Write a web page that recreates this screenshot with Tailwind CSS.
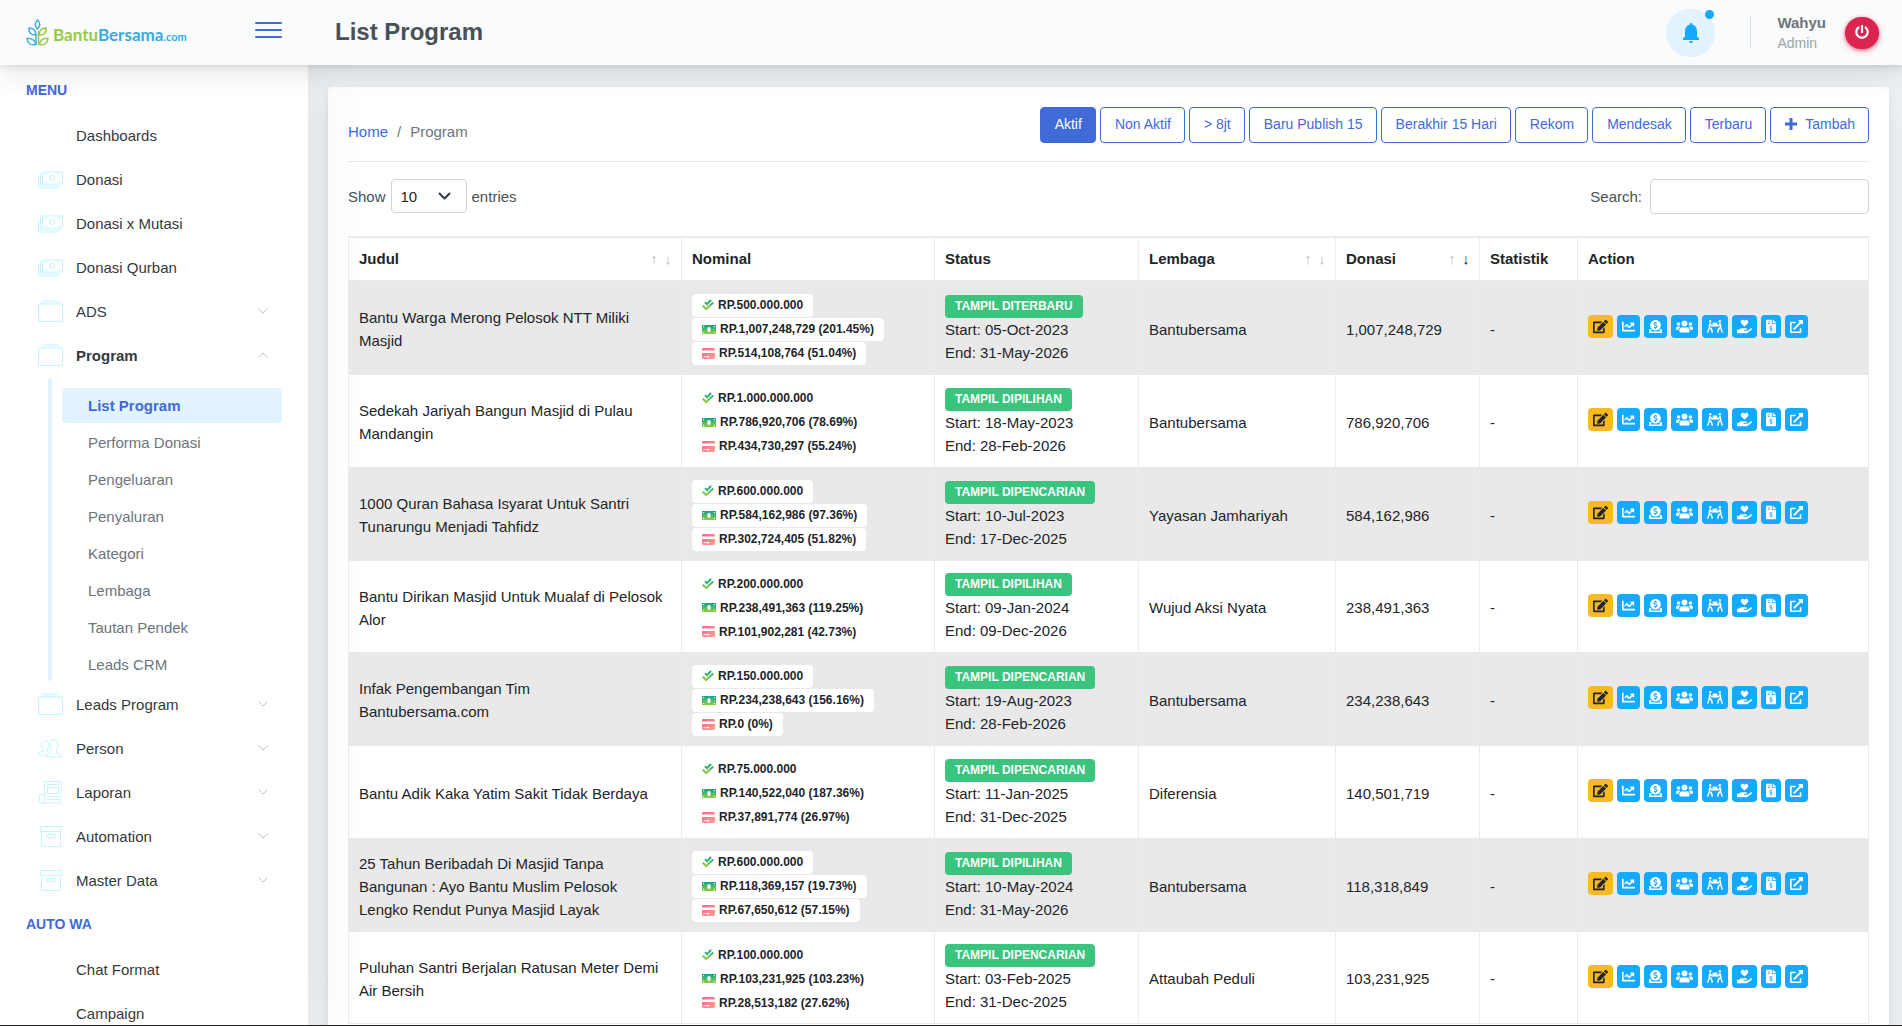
<!DOCTYPE html>
<html lang="id">
<head>
    <meta charset="UTF-8">
    <meta name="viewport" content="width=device-width, initial-scale=1.0">
    <title>List Program</title>
    <script src="https://cdn.jsdelivr.net/npm/@tailwindcss/browser@4"></script>
</head>
<body class="h-screen overflow-hidden flex flex-col bg-[#edf1f4] border-b border-[#222222] font-['Liberation_Sans',Arial,sans-serif] text-[15px] leading-[23px] text-[#495057]">

    <!-- Icon sprite -->
    <svg class="absolute w-0 h-0" aria-hidden="true">
        <defs>
            <linearGradient id="green" x1="0" y1="0" x2="0" y2="1">
                <stop offset="0" stop-color="#0ba58f"/>
                <stop offset="1" stop-color="#8fcf3c"/>
            </linearGradient>
            <linearGradient id="pink" x1="0" y1="0" x2="1" y2="1">
                <stop offset="0" stop-color="#ff5f8f"/>
                <stop offset="1" stop-color="#ffa08a"/>
            </linearGradient>
        </defs>
        <symbol id="cash" viewBox="0 0 25 18">
            <g fill="none" stroke="currentColor">
                <path d="M4.500 1.500h20v12h-20z"/>
                <path d="M2.500 2.500v13h20.500M.5 4.500v13h20.500" />
                <circle cx="14.500" cy="7.500" r="2.500"/>
                <path d="M6.500 3.500h3M19.500 3.500h3M6.500 11.500h2M20.500 11.500h2"/>
            </g>
        </symbol>
        <symbol id="albums" viewBox="0 0 25 22">
            <g fill="none" stroke="currentColor">
                <path d="M.5 3.500h24v17.500h-24z"/>
                <path d="M4 .5h17"/>
                <path d="M2 2.500h21" opacity=".5"/>
            </g>
        </symbol>
        <symbol id="persons" viewBox="0 0 25 20">
            <g fill="none" stroke="currentColor">
                <path d="M8.500 18.500v-1.500c0-1 1-1.500 5-3v-2c-1.500-1.500-1.500-4-1.500-6 0-3 1.500-5 4-5s4 2 4 5c0 2 0 4.500-1.500 6v2c4 1.500 5 2 5 3v1.500z"/>
                <path d="M8 16.500H1v-1.500c0-1 1-1.500 4-2.500v-2c-1-1-1.500-2.500-1.500-4 0-2.500 1.500-4 3.500-4s3.500 1 3.500 3c0 2 0 4-1.500 5v2l2 1"/>
            </g>
        </symbol>
        <symbol id="news" viewBox="0 0 25 23">
            <g fill="none" stroke="currentColor">
                <path d="M6.500 22v-21.500h16.500v21.500h-19.500c-1.500 0-2-.5-2-2v-6.500h5"/>
                <path d="M9 3.500h12M9.500 6.500h11v6h-11zM9 15.500h12M9 18.500h12"/>
            </g>
        </symbol>
        <symbol id="box" viewBox="0 0 25 21">
            <g fill="none" stroke="currentColor">
                <path d="M2.500 .5h21v5h-21zM3.500 5.500v15h19v-15"/>
                <rect x="8.500" y="8.500" width="9" height="3" rx="1.500"/>
            </g>
        </symbol>
        <symbol id="edit" viewBox="0 0 576 512"><path fill="currentColor" d="M402.600 83.200l90.200 90.200c3.800 3.800 3.800 10 0 13.800L274.400 405.600l-92.800 10.300c-12.400 1.400-22.900-9.100-21.500-21.500l10.300-92.800L388.800 83.200c3.800-3.800 10-3.800 13.800 0zm162-22.900l-48.800-48.800c-15.200-15.200-39.900-15.200-55.200 0l-35.400 35.400c-3.800 3.800-3.800 10 0 13.800l90.200 90.200c3.800 3.800 10 3.800 13.800 0l35.400-35.400c15.200-15.300 15.200-40 0-55.200zM384 346.200V448H64V128h229.800c3.200 0 6.200-1.300 8.500-3.500l40-40c7.600-7.600 2.200-20.500-8.500-20.500H48C21.500 64 0 85.500 0 112v352c0 26.500 21.500 48 48 48h352c26.500 0 48-21.500 48-48V306.200c0-10.700-12.900-16-20.500-8.500l-40 40c-2.200 2.300-3.500 5.300-3.500 8.500z"/></symbol>
        <symbol id="chart" viewBox="0 0 512 512"><path fill="currentColor" d="M496 384H64V80c0-8.840-7.160-16-16-16H16C7.160 64 0 71.160 0 80v336c0 17.670 14.330 32 32 32h464c8.840 0 16-7.160 16-16v-32c0-8.840-7.160-16-16-16zM464 96H345.940c-21.380 0-32.090 25.850-16.970 40.970l32.400 32.400L288 242.750l-73.370-73.370c-12.500-12.500-32.760-12.500-45.250 0l-68.690 68.690c-6.250 6.250-6.250 16.380 0 22.630l22.620 22.620c6.250 6.250 16.380 6.250 22.630 0L192 237.250l73.370 73.370c12.500 12.500 32.760 12.500 45.250 0l96-96 32.400 32.400c15.120 15.120 40.970 4.410 40.970-16.970V112c.01-8.840-7.150-16-15.990-16z"/></symbol>
        <symbol id="donate" viewBox="0 0 512 512"><path fill="currentColor" d="M256 416c114.900 0 208-93.100 208-208S370.900 0 256 0 48 93.100 48 208s93.100 208 208 208zM233.800 97.400V80.600c0-9.200 7.400-16.600 16.600-16.600h11.100c9.200 0 16.600 7.400 16.600 16.600v17c15.500.8 30.500 6.100 43 15.400 5.600 4.100 6.200 12.300 1.200 17.100L306 145.600c-3.800 3.700-9.500 3.800-14 1-5.400-3.400-11.400-5.100-17.800-5.100h-38.900c-9 0-16.300 8.200-16.300 18.300 0 8.200 5 15.500 12.100 17.600l62.300 18.700c25.700 7.700 43.700 32.400 43.700 60.100 0 34-26.400 61.500-59.100 62.400v16.800c0 9.200-7.400 16.600-16.600 16.600h-11.100c-9.200 0-16.600-7.400-16.600-16.600v-17c-15.500-.8-30.500-6.100-43-15.400-5.600-4.100-6.200-12.300-1.200-17.100l16.300-15.500c3.800-3.700 9.500-3.800 14-1 5.400 3.400 11.400 5.100 17.800 5.100h38.900c9 0 16.300-8.200 16.300-18.300 0-8.200-5-15.500-12.100-17.600l-62.300-18.700c-25.700-7.700-43.700-32.400-43.700-60.100.1-34 26.400-61.500 59.100-62.400zM480 352h-32.500c-19.600 26-44.600 47.700-73 64h63.800c5.300 0 9.600 3.600 9.600 8v16c0 4.400-4.300 8-9.600 8H73.600c-5.300 0-9.600-3.600-9.600-8v-16c0-4.400 4.300-8 9.600-8h63.800c-28.400-16.300-53.300-38-73-64H32c-17.700 0-32 14.300-32 32v96c0 17.700 14.300 32 32 32h448c17.700 0 32-14.300 32-32v-96c0-17.700-14.300-32-32-32z"/></symbol>
        <symbol id="users" viewBox="0 0 640 512"><path fill="currentColor" d="M96 224c35.300 0 64-28.700 64-64s-28.700-64-64-64-64 28.700-64 64 28.700 64 64 64zm448 0c35.300 0 64-28.700 64-64s-28.700-64-64-64-64 28.700-64 64 28.700 64 64 64zm32 32h-64c-17.600 0-33.500 7.100-45.100 18.600 40.300 22.100 68.900 62 75.100 109.400h66c17.700 0 32-14.300 32-32v-32c0-35.300-28.700-64-64-64zm-256 0c61.900 0 112-50.100 112-112S381.900 32 320 32 208 82.100 208 144s50.100 112 112 112zm76.800 32h-8.300c-20.800 10-43.900 16-68.500 16s-47.600-6-68.500-16h-8.300C179.600 288 128 339.600 128 403.200V432c0 26.500 21.500 48 48 48h288c26.500 0 48-21.500 48-48v-28.800c0-63.600-51.600-115.200-115.200-115.200zm-223.700-13.400C161.500 263.100 145.600 256 128 256H64c-35.300 0-64 28.700-64 64v32c0 17.700 14.300 32 32 32h65.900c6.300-47.400 34.900-87.300 75.200-109.400z"/></symbol>
        <symbol id="carry" viewBox="0 0 640 512">
            <g fill="currentColor">
                <circle cx="128" cy="48" r="48"/>
                <circle cx="512" cy="48" r="48"/>
                <rect x="224" y="96" width="192" height="160" rx="16"/>
            </g>
            <g fill="none" stroke="currentColor" stroke-width="60" stroke-linecap="round" stroke-linejoin="round">
                <path d="M112 150l-24 130 90 80 30 120M75 350L35 480M130 150l50 80h60"/>
                <path d="M528 150l24 130-90 80-30 120M565 350l40 130M510 150l-50 80h-60"/>
            </g>
        </symbol>
        <symbol id="heart" viewBox="0 0 576 512"><path fill="currentColor" d="M275.300 250.500c7 7.400 18.400 7.400 25.500 0l108.900-114.200c31.600-33.200 29.800-88.200-5.600-118.800-30.800-26.700-76.700-21.900-104.900 7.700L288 36.900l-11.100-11.600C248.700-4.400 202.800-9.200 172 17.500c-35.300 30.600-37.200 85.600-5.600 118.800l108.900 114.200zm290 77.600c-11.800-10.700-30.200-10-42.600 0L430.300 402c-11.300 9.100-25.400 14-40 14H272c-8.800 0-16-7.200-16-16s7.200-16 16-16h78.300c15.900 0 30.700-10.900 33.300-26.600 3.300-20-12.100-37.400-31.600-37.400H192c-27 0-53.100 9.300-74.100 26.300L71.400 384H16c-8.800 0-16 7.200-16 16v96c0 8.800 7.200 16 16 16h356.800c14.500 0 28.600-4.900 40-14L564 377c15.200-12.100 16.400-35.300 1.300-48.900z"/></symbol>
        <symbol id="invoice" viewBox="0 0 384 512"><path fill="currentColor" d="M377 105L279.100 7c-4.500-4.500-10.600-7-17-7H256v128h128v-6.100c0-6.300-2.500-12.400-7-16.900zm-153 31V0H24C10.700 0 0 10.700 0 24v464c0 13.300 10.700 24 24 24h336c13.300 0 24-10.700 24-24V160H248c-13.200 0-24-10.800-24-24zM64 72c0-4.420 3.580-8 8-8h80c4.420 0 8 3.580 8 8v16c0 4.420-3.580 8-8 8H72c-4.420 0-8-3.580-8-8V72zm0 80v-16c0-4.420 3.580-8 8-8h80c4.420 0 8 3.580 8 8v16c0 4.420-3.580 8-8 8H72c-4.420 0-8-3.580-8-8zm144 263.880V440c0 4.420-3.580 8-8 8h-16c-4.420 0-8-3.580-8-8v-24.290c-11.290-.58-22.270-4.520-31.370-11.350-3.900-2.930-4.100-8.770-.57-12.140l11.750-11.210c2.770-2.640 6.890-2.760 10.130-.73 3.870 2.420 8.260 3.720 12.820 3.720h28.110c6.500 0 11.800-5.920 11.800-13.190 0-5.950-3.610-11.190-8.770-12.730l-45-13.500c-18.590-5.580-31.580-23.420-31.580-43.390 0-24.520 19.050-44.440 42.670-45.070V232c0-4.420 3.580-8 8-8h16c4.420 0 8 3.580 8 8v24.290c11.290.58 22.270 4.510 31.370 11.350 3.900 2.930 4.100 8.770.57 12.140l-11.750 11.210c-2.770 2.640-6.890 2.760-10.130.73-3.870-2.430-8.260-3.720-12.820-3.720h-28.110c-6.500 0-11.800 5.920-11.800 13.190 0 5.950 3.610 11.190 8.770 12.730l45 13.500c18.590 5.580 31.580 23.420 31.580 43.390 0 24.530-19.050 44.440-42.670 45.070z"/></symbol>
        <symbol id="external" viewBox="0 0 512 512"><path fill="currentColor" d="M432,320H400a16,16,0,0,0-16,16V448H64V128H208a16,16,0,0,0,16-16V80a16,16,0,0,0-16-16H48A48,48,0,0,0,0,112V464a48,48,0,0,0,48,48H400a48,48,0,0,0,48-48V336A16,16,0,0,0,432,320ZM488,0h-128c-21.370,0-32.050,25.910-17,41l35.730,35.730L135,320.370a24,24,0,0,0,0,34L157.670,377a24,24,0,0,0,34,0L435.280,133.320,471,169c15,15,41,4.500,41-17V24A24,24,0,0,0,488,0Z"/></symbol>
    </svg>

    <!-- Header -->
    <header class="relative z-20 h-[65px] shrink-0 flex items-center bg-[#fafbfc] shadow-[0_8px_35px_rgba(4,9,20,0.04),0_15px_22px_rgba(4,9,20,0.04),0_4px_8px_rgba(4,9,20,0.06),0_2px_3px_rgba(4,9,20,0.04)]">
        <div class="w-[308px] shrink-0 flex items-center justify-between px-[26px]">
            <a href="#" class="flex items-end gap-[4px]">
                <svg class="w-[23px] h-[27px]" viewBox="0 0 23 27" fill="none" stroke-width="1.500">
                    <g stroke="#3fb0e3">
                        <path d="M11.500 1c3 3 3 6 0 9c-3-3-3-6 0-9z"/>
                        <path d="M9.500 16c-5 0-7-2.500-6.500-7c4.500 0 7 2.500 6.500 7zM9.500 25.500c-5 1-8-1-8.500-6c5-.5 8 1.500 8.500 6z"/>
                        <path d="M10 14v12"/>
                    </g>
                    <g stroke="#97cb3f">
                        <path d="M13.500 16c5 0 7-2.500 6.500-7c-4.500 0-7 2.500-6.500 7zM13.500 25.500c5 1 8-1 8.500-6c-5-.5-8 1.500-8.500 6z"/>
                        <path d="M12.500 12v14"/>
                    </g>
                </svg>
                <span class="font-['Lato',sans-serif] font-bold text-[17px] leading-[18px] text-[#97cb3f]">Bantu<span class="text-[#35ace2]">Bersama</span><span class="text-[11px] text-[#35ace2]">.com</span></span>
            </a>
            <button type="button" aria-label="Toggle menu" class="w-[27px] flex flex-col gap-[5px] pb-[6px]">
                <span class="h-[2px] rounded bg-[#3f6ad8]"></span>
                <span class="h-[2px] rounded bg-[#3f6ad8]"></span>
                <span class="h-[2px] rounded bg-[#3f6ad8]"></span>
            </button>
        </div>
        <h1 class="pl-[27px] pb-[2px] text-2xl font-bold">List Program</h1>
        <div class="ml-auto pr-[23px] flex items-center">
            <button type="button" aria-label="Notifications" class="relative w-[49px] h-12 rounded-full bg-[#e2f2fe] flex items-center justify-center">
                <svg class="w-[16px] h-[20px]" viewBox="0 0 16 20" fill="#16aaff">
                    <path d="M8 0c1 0 1.500.7 1.500 1.700C12.300 2.500 14 4.800 14 8v5.500l2 2V17H0v-1.500l2-2V8c0-3.200 1.700-5.500 4.500-6.300C6.500.7 7 0 8 0zM6 18h4c0 1.200-.9 2-2 2s-2-.8-2-2z"/>
                </svg>
                <span class="absolute top-px right-px w-[9px] h-[9px] rounded-full bg-[#16aaff]"></span>
            </button>
            <div class="ml-[35px] pl-[26px] h-[33px] border-l border-[#dee2e6] flex flex-col justify-center">
                <div class="font-bold leading-[21px] text-[#6c757d]">Wahyu</div>
                <div class="text-sm leading-[21px] text-[#a0a4a8]">Admin</div>
            </div>
            <button type="button" aria-label="Logout" class="ml-[19px] w-[34px] h-8 rounded-full bg-[#d92550] text-white flex items-center justify-center pb-[2px] shadow-[0_2px_6px_rgba(217,37,80,0.4),0_1px_3px_rgba(217,37,80,0.5)]">
                <svg class="w-[14px] h-[14px]" viewBox="0 0 512 512" fill="currentColor"><path d="M400 54.100c63 45 104 118.600 104 201.900 0 136.800-110.800 247.700-247.500 248C120 504.300 8.200 393 8 256.400 7.900 173.100 48.900 99.300 111.800 54.200c11.700-8.300 28-4.800 35 7.700L162.600 90c5.900 10.500 3.100 23.800-6.600 31-41.500 30.800-68 79.600-68 134.900-.1 92.300 74.500 168.100 168 168.100 91.600 0 168.600-74.200 168-169.100-.3-51.800-24.700-101.800-68.100-134-9.700-7.200-12.400-20.500-6.500-30.900l15.800-28.100c7-12.400 23.200-16.100 34.800-7.800zM296 264V24c0-13.300-10.700-24-24-24h-32c-13.300 0-24 10.700-24 24v240c0 13.300 10.700 24 24 24h32c13.300 0 24-10.700 24-24z"/></svg>
            </button>
        </div>
    </header>

    <div class="flex flex-1 min-h-0">
        <!-- Sidebar -->
        <aside class="relative z-10 w-[308px] shrink-0 overflow-hidden bg-white px-[26px] pt-[3px] text-[#343a40] shadow-[7px_0_60px_rgba(0,0,0,0.05)]">
            <nav id="sidebar"></nav>
        </aside>

        <!-- Main Content -->
        <main class="flex-1 min-w-0 pt-[22px] pl-5 pr-[13px]">
            <section class="bg-white rounded p-5 shadow-[0_8px_35px_rgba(4,9,20,0.03),0_15px_22px_rgba(4,9,20,0.03),0_4px_8px_rgba(4,9,20,0.05),0_2px_3px_rgba(4,9,20,0.03)]">
                <div class="flex justify-between items-end">
                    <nav class="flex gap-[9px]">
                        <a href="#" class="text-[#3f6ad8]">Home</a>
                        <span class="text-[#6c757d]">/</span>
                        <span class="text-[#6c757d]">Program</span>
                    </nav>
                    <div class="flex gap-1" id="filters"></div>
                </div>
                <hr class="mt-[18px] border-[#e3e6e8]">

                <div class="mt-[17px] flex justify-between">
                    <label class="flex items-center gap-[5px] h-[34px]">
                        Show
                        <span class="relative">
                            <select class="appearance-none w-[76px] h-[34px] pl-[9px] pt-px border border-[#ced4da] rounded bg-white text-[#212529]">
                                <option>10</option>
                                <option>25</option>
                                <option>50</option>
                                <option>100</option>
                            </select>
                            <svg class="absolute right-[16px] top-[13px] w-[13px] h-[8px] pointer-events-none" viewBox="0 0 13 8" fill="none" stroke="#343a40" stroke-width="2" stroke-linecap="round" stroke-linejoin="round"><path d="M1.500 1.500l5 5 5-5"/></svg>
                        </span>
                        entries
                    </label>
                    <label class="flex items-center gap-2 h-[35px]">
                        Search:
                        <input type="search" class="w-[219px] h-[35px] px-2 border border-[#ced4da] rounded bg-white">
                    </label>
                </div>

                <!-- Program Table -->
                <table class="mt-[22px] w-full table-fixed border-separate border-spacing-0 border-l border-[#e9ecef] text-[#212529]">
                    <colgroup>
                        <col class="w-[333px]">
                        <col class="w-[253px]">
                        <col class="w-[204px]">
                        <col class="w-[197px]">
                        <col class="w-[144px]">
                        <col class="w-[98px]">
                        <col>
                    </colgroup>
                    <thead>
                        <tr id="tableHead"></tr>
                    </thead>
                    <tbody id="programRows"></tbody>
                </table>
            </section>
        </main>
    </div>

    <script>
        const menu = [
            { heading: 'MENU' },
            { label: 'Dashboards' },
            { label: 'Donasi', icon: 'cash' },
            { label: 'Donasi x Mutasi', icon: 'cash' },
            { label: 'Donasi Qurban', icon: 'cash' },
            { label: 'ADS', icon: 'albums', arrow: true },
            { label: 'Program', icon: 'albums', arrow: true, open: ['List Program', 'Performa Donasi', 'Pengeluaran', 'Penyaluran', 'Kategori', 'Lembaga', 'Tautan Pendek', 'Leads CRM'] },
            { label: 'Leads Program', icon: 'albums', arrow: true },
            { label: 'Person', icon: 'persons', arrow: true },
            { label: 'Laporan', icon: 'news', arrow: true },
            { label: 'Automation', icon: 'box', arrow: true },
            { label: 'Master Data', icon: 'box', arrow: true },
            { heading: 'AUTO WA' },
            { label: 'Chat Format' },
            { label: 'Campaign' }
        ];

        const filters = ['Aktif', 'Non Aktif', '> 8jt', 'Baru Publish 15', 'Berakhir 15 Hari', 'Rekom', 'Mendesak', 'Terbaru', 'Tambah'];

        const columns = [
            { name: 'Judul', sort: 'none' },
            { name: 'Nominal' },
            { name: 'Status' },
            { name: 'Lembaga', sort: 'none' },
            { name: 'Donasi', sort: 'desc' },
            { name: 'Statistik' },
            { name: 'Action' }
        ];

        const programs = [
            ['Bantu Warga Merong Pelosok NTT Miliki Masjid', '500.000.000', '1,007,248,729 (201.45%)', '514,108,764 (51.04%)', 'TAMPIL DITERBARU', '05-Oct-2023', '31-May-2026', 'Bantubersama', '1,007,248,729'],
            ['Sedekah Jariyah Bangun Masjid di Pulau Mandangin', '1.000.000.000', '786,920,706 (78.69%)', '434,730,297 (55.24%)', 'TAMPIL DIPILIHAN', '18-May-2023', '28-Feb-2026', 'Bantubersama', '786,920,706'],
            ['1000 Quran Bahasa Isyarat Untuk Santri Tunarungu Menjadi Tahfidz', '600.000.000', '584,162,986 (97.36%)', '302,724,405 (51.82%)', 'TAMPIL DIPENCARIAN', '10-Jul-2023', '17-Dec-2025', 'Yayasan Jamhariyah', '584,162,986'],
            ['Bantu Dirikan Masjid Untuk Mualaf di Pelosok Alor', '200.000.000', '238,491,363 (119.25%)', '101,902,281 (42.73%)', 'TAMPIL DIPILIHAN', '09-Jan-2024', '09-Dec-2026', 'Wujud Aksi Nyata', '238,491,363'],
            ['Infak Pengembangan Tim<br>Bantubersama.com', '150.000.000', '234,238,643 (156.16%)', '0 (0%)', 'TAMPIL DIPENCARIAN', '19-Aug-2023', '28-Feb-2026', 'Bantubersama', '234,238,643'],
            ['Bantu Adik Kaka Yatim Sakit Tidak Berdaya', '75.000.000', '140,522,040 (187.36%)', '37,891,774 (26.97%)', 'TAMPIL DIPENCARIAN', '11-Jan-2025', '31-Dec-2025', 'Diferensia', '140,501,719'],
            ['25 Tahun Beribadah Di Masjid Tanpa Bangunan : Ayo Bantu Muslim Pelosok<br>Lengko Rendut Punya Masjid Layak', '600.000.000', '118,369,157 (19.73%)', '67,650,612 (57.15%)', 'TAMPIL DIPILIHAN', '10-May-2024', '31-May-2026', 'Bantubersama', '118,318,849'],
            ['Puluhan Santri Berjalan Ratusan Meter Demi Air Bersih', '100.000.000', '103,231,925 (103.23%)', '28,513,182 (27.62%)', 'TAMPIL DIPENCARIAN', '03-Feb-2025', '31-Dec-2025', 'Attaubah Peduli', '103,231,925']
        ];

        const checkIcon = `<svg class="w-[12px] h-[12px]" viewBox="0 0 12 12" fill="none" stroke="url(#green)" stroke-width="2"><path d="M.8 6.800L4.200 10.200 11.200 3.600M3 3.200l2 2L9 1"/></svg>`;
        const moneyIcon = `<svg class="w-[14px] h-[9px]" viewBox="0 0 14 9"><path fill="url(#green)" fill-rule="evenodd" d="M0 0h14v9H0zM7 2C5.900 2 5.300 3 5.300 4.500S5.900 7 7 7s1.700-1 1.700-2.500S8.100 2 7 2zM1 1v1.500L2.500 1zM13 1v1.500L11.500 1zM1 8V6.500L2.500 8zM13 8V6.500L11.500 8z"/></svg>`;
        const cardIcon = `<svg class="w-[13px] h-[11px]" viewBox="0 0 13 11"><path fill="url(#pink)" fill-rule="evenodd" d="M1 0h11l1 1v1.500H0V1zM0 5h13v5l-1 1H1l-1-1zM1.500 8v1.200h1.500V8zM4 8v1.200h3.500V8z"/></svg>`;

        // Action buttons shown on every row
        const actions = [
            ['edit', 'Edit', 'w-[15px]'],
            ['chart', 'Statistik', 'w-[13px]'],
            ['donate', 'Donasi', 'w-[13px]'],
            ['users', 'Donatur', 'w-[17px]'],
            ['carry', 'Penyaluran', 'w-[16px]'],
            ['heart', 'Fundraiser', 'w-[15px]'],
            ['invoice', 'Pengeluaran', 'w-[10px]'],
            ['external', 'Buka', 'w-[13px]']
        ];

        function renderSidebar() {
            document.getElementById('sidebar').innerHTML = menu.map(item => {
                if (item.heading) {
                    return `<h2 class="h-[45px] pb-px flex items-center text-sm font-bold text-[#3f6ad8]">${item.heading}</h2>`;
                }
                const icon = item.icon ? `<svg class="w-[25px] h-[23px] text-[#c2f5fc]"><use href="#${item.icon}"/></svg>` : '<span class="w-[25px]"></span>';
                const flip = item.open ? 'rotate-180' : '';
                const arrow = item.arrow ? `<svg class="ml-auto w-[10px] h-[6px] ${flip}" viewBox="0 0 10 6" fill="none" stroke="#c0c2c4"><path d="M.5 .5l4.500 4.500 4.500-4.500"/></svg>` : '';
                const weight = item.open ? 'font-bold' : '';
                const link = `<a href="#" class="h-11 pl-[12px] pr-[14px] flex items-center gap-[13px] ${weight}">${icon}${item.label}${arrow}</a>`;
                if (!item.open) return link;
                const children = item.open.map((child, i) => {
                    const active = i === 0 ? 'bg-[#e0f3ff] font-bold text-[#3f6ad8]' : 'text-[#6c757d]';
                    return `<li><a href="#" class="block h-[35px] pl-[26px] leading-[35px] rounded ${active}">${child}</a></li>`;
                }).join('');
                return `${link}
                    <div class="flex gap-[10px] pl-[22px]">
                        <span class="w-1 my-px rounded bg-[#e0f3ff]"></span>
                        <ul class="flex-1 flex flex-col gap-[2px] pt-[11px]">${children}</ul>
                    </div>`;
            }).join('');
        }

        function renderFilters() {
            document.getElementById('filters').innerHTML = filters.map((name, i) => {
                const active = i === 0 ? 'bg-[#3f6ad8] text-white' : 'text-[#3f6ad8]';
                const plus = name === 'Tambah' ? '<svg class="w-[12px] h-[12px]" viewBox="0 0 12 12" stroke="currentColor" stroke-width="3"><path d="M6 0v12M0 6h12"/></svg>' : '';
                return `<button type="button" class="h-9 pl-[14px] pr-[13px] pb-[2px] flex items-center gap-2 border border-[#3f6ad8] rounded text-sm ${active}">${plus}${name}</button>`;
            }).join('');
        }

        function renderHead() {
            document.getElementById('tableHead').innerHTML = columns.map(col => {
                const down = col.sort === 'desc' ? 'text-[#212529]' : 'text-[#bcbebf]';
                const arrows = col.sort ? `<span class="flex font-normal text-[#bcbebf]"><span class="w-[14px] text-center">↑</span><span class="w-[14px] text-center ${down}">↓</span></span>` : '';
                return `<th class="h-[46px] pl-[10px] pr-[6px] pb-px border-y-2 border-r border-[#e9ecef] text-left">
                    <div class="flex justify-between">${col.name}${arrows}</div>
                </th>`;
            }).join('');
        }

        function nominal(icon, value) {
            return `<span class="h-[23px] px-[10px] rounded bg-white flex items-center gap-1 text-xs font-bold">${icon}RP.${value}</span>`;
        }

        function renderRows() {
            const buttons = actions.map(([icon, label, width]) => {
                const color = icon === 'edit' ? 'bg-[#f7b924] text-[#212529]' : 'bg-[#16aaff] text-white';
                return `<button type="button" aria-label="${label}" class="h-[23px] px-[5px] rounded ${color}"><svg class="${width} h-[15px]"><use href="#${icon}"/></svg></button>`;
            }).join('');

            document.getElementById('programRows').innerHTML = programs.map(p => `
                <tr class="h-[93px] nth-[4n]:h-[92px] odd:bg-[#e9e9e9] *:px-[10px] *:pt-[2px] *:border-r *:border-b *:border-[#e9ecef]">
                    <td>${p[0]}</td>
                    <td>
                        <div class="flex flex-col items-start gap-px">
                            ${nominal(checkIcon, p[1])}
                            ${nominal(moneyIcon, p[2])}
                            ${nominal(cardIcon, p[3])}
                        </div>
                    </td>
                    <td>
                        <div class="w-fit h-[23px] px-[10px] rounded bg-[#3ac47d] text-white text-xs leading-[23px] font-bold">${p[4]}</div>
                        <div>Start: ${p[5]}</div>
                        <div>End: ${p[6]}</div>
                    </td>
                    <td>${p[7]}</td>
                    <td>${p[8]}</td>
                    <td>-</td>
                    <td><div class="flex gap-1 pb-[5px]">${buttons}</div></td>
                </tr>`).join('');
        }

        renderSidebar();
        renderFilters();
        renderHead();
        renderRows();
    </script>

</body>
</html>
